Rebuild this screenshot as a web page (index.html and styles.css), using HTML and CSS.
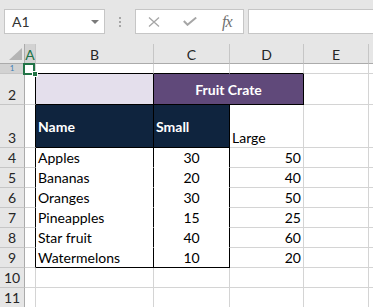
FILE: index.html
```html
<!DOCTYPE html>
<html lang="en">

<head>
    <meta charset="UTF-8">
    <meta name="viewport" content="width=device-width, initial-scale=1.0">
    <title>Fruit Crate</title>
    <link rel="stylesheet" href="styles.css">
</head>

<body>
    <!-- Formula bar -->
    <div class="toolbar">
        <div class="name-box">
            <span>A1</span>
            <span class="drop-arrow"></span>
        </div>
        <div class="grip">
            <span></span><span></span><span></span>
        </div>
        <div class="fx-box">
            <svg class="icon" width="12" height="10" viewBox="0 0 12 10">
                <path d="M1 0.5 L11 9.5 M11 0.5 L1 9.5" stroke="#a6a6a6" stroke-width="1.3" fill="none"/>
            </svg>
            <svg class="icon" width="14" height="9" viewBox="0 0 14 9">
                <path d="M0.8 4 L4.5 7.8 L13.2 0.6" stroke="#a6a6a6" stroke-width="2" fill="none"/>
            </svg>
            <span class="fx">fx</span>
        </div>
        <div class="formula-input"></div>
    </div>

    <!-- Sheet grid -->
    <div class="sheet">
        <!-- column headers -->
        <div class="corner"><span class="select-all"></span></div>
        <div class="ch ch-active">A</div>
        <div class="ch">B</div>
        <div class="ch">C</div>
        <div class="ch">D</div>
        <div class="ch">E</div>
        <div class="ch ch-end"></div>

        <!-- row 1 -->
        <div class="rh rh-active short">1</div>
        <div class="c a1">
            <span class="sel-box"></span>
            <span class="fill-handle"></span>
        </div>
        <div class="c bb"></div>
        <div class="c bb"></div>
        <div class="c bb"></div>
        <div class="c"></div>
        <div class="c c-end"></div>

        <!-- row 2 -->
        <div class="rh">2</div>
        <div class="c br"></div>
        <div class="c lavender br bb"></div>
        <div class="c merged purple br bb">Fruit Crate</div>
        <div class="c"></div>
        <div class="c c-end"></div>

        <!-- row 3 -->
        <div class="rh">3</div>
        <div class="c br"></div>
        <div class="c navy br bb middle">Name</div>
        <div class="c navy br bb middle">Small</div>
        <div class="c">Large</div>
        <div class="c"></div>
        <div class="c c-end"></div>

        <!-- rows 4 - 9 -->
        <div class="rh">4</div>
        <div class="c br"></div>
        <div class="c plain br">Apples</div>
        <div class="c plain br center">30</div>
        <div class="c right">50</div>
        <div class="c"></div>
        <div class="c c-end"></div>

        <div class="rh">5</div>
        <div class="c br"></div>
        <div class="c plain br">Bananas</div>
        <div class="c plain br center">20</div>
        <div class="c right">40</div>
        <div class="c"></div>
        <div class="c c-end"></div>

        <div class="rh">6</div>
        <div class="c br"></div>
        <div class="c plain br">Oranges</div>
        <div class="c plain br center">30</div>
        <div class="c right">50</div>
        <div class="c"></div>
        <div class="c c-end"></div>

        <div class="rh">7</div>
        <div class="c br"></div>
        <div class="c plain br">Pineapples</div>
        <div class="c plain br center">15</div>
        <div class="c right">25</div>
        <div class="c"></div>
        <div class="c c-end"></div>

        <div class="rh">8</div>
        <div class="c br"></div>
        <div class="c plain br">Star fruit</div>
        <div class="c plain br center">40</div>
        <div class="c right">60</div>
        <div class="c"></div>
        <div class="c c-end"></div>

        <div class="rh">9</div>
        <div class="c br"></div>
        <div class="c br bb">Watermelons</div>
        <div class="c br bb center">10</div>
        <div class="c right">20</div>
        <div class="c"></div>
        <div class="c c-end"></div>

        <!-- rows 10 - 11 -->
        <div class="rh">10</div>
        <div class="c"></div>
        <div class="c"></div>
        <div class="c"></div>
        <div class="c"></div>
        <div class="c"></div>
        <div class="c c-end"></div>

        <div class="rh">11</div>
        <div class="c"></div>
        <div class="c"></div>
        <div class="c"></div>
        <div class="c"></div>
        <div class="c"></div>
        <div class="c c-end"></div>
    </div>
</body>

</html>
```

FILE: styles.css
```css
body {
    margin: 0;
    width: 373px;
    height: 307px;
    overflow: hidden;
    background-color: #fff;
    font-family: Lato, "Open Sans", sans-serif;
    font-size: 14px;
    color: #000;
}

/* formula bar */
.toolbar {
    display: flex;
    align-items: flex-start;
    height: 44px;
    padding-top: 9px;
    box-sizing: border-box;
    background-color: #e6e6e6;
}

.name-box {
    display: flex;
    align-items: center;
    justify-content: space-between;
    margin-left: 4px;
    width: 101px;
    height: 25px;
    padding: 0 5px 0 7px;
    box-sizing: border-box;
    background: #fff;
    border: 1px solid #c6c6c6;
    color: #333;
    font-size: 14px;
}

.drop-arrow {
    width: 0;
    height: 0;
    border-left: 4px solid transparent;
    border-right: 4px solid transparent;
    border-top: 4px solid #7a7a7a;
}

.grip {
    display: flex;
    flex-direction: column;
    gap: 2px;
    margin: 8px 0 0 14px;
}

.grip span {
    width: 2px;
    height: 2px;
    background-color: #a6a6a6;
}

.fx-box {
    display: flex;
    align-items: center;
    margin-left: 14px;
    width: 109px;
    height: 25px;
    padding-left: 12px;
    gap: 23px;
    box-sizing: border-box;
    background: #fff;
    border: 1px solid #c6c6c6;
}

.fx-box .icon {
    flex: none;
}

.fx {
    margin-left: 2px;
    font-family: "Liberation Serif", serif;
    font-style: italic;
    font-size: 16px;
    color: #6f6f6f;
    letter-spacing: -1px;
}

.formula-input {
    flex: 1;
    margin-left: 4px;
    height: 25px;
    box-sizing: border-box;
    background: #fff;
    border: 1px solid #c6c6c6;
    border-right: none;
}

/* sheet grid */
.sheet {
    display: grid;
    grid-template-columns: 25px 11px 118px 76px 74px 65px 1fr;
    grid-template-rows: 20px 10px 31px 43px repeat(8, 20px);
}

.sheet > div {
    box-sizing: border-box;
    overflow: hidden;
    white-space: nowrap;
}

.corner {
    position: relative;
    background-color: #e6e6e6;
    border-right: 1px solid #ababab;
    border-bottom: 1px solid #ababab;
}

.select-all {
    position: absolute;
    right: 2px;
    bottom: 3px;
    width: 0;
    height: 0;
    border-left: 13px solid transparent;
    border-bottom: 12px solid #b4b4b4;
}

.ch {
    display: flex;
    align-items: center;
    justify-content: center;
    padding-top: 1px;
    background-color: #e6e6e6;
    border-right: 1px solid #c6c6c6;
    border-bottom: 1px solid #ababab;
    color: #262626;
}

.ch-active {
    background-color: #d2d2d2;
    color: #217346;
}

.ch-end {
    border-right: none;
}

.rh {
    display: flex;
    align-items: flex-end;
    justify-content: center;
    background-color: #e6e6e6;
    border-right: 1px solid #ababab;
    border-bottom: 1px solid #c6c6c6;
    color: #262626;
    line-height: 17px;
    padding-bottom: 1px;
}

.rh-active {
    background-color: #d2d2d2;
    color: #3d7fb5;
}

/* row 1 is only 10px tall */
.short {
    align-items: center;
    padding: 0;
    line-height: 9px;
    font-size: 8px;
}

.c {
    display: flex;
    align-items: flex-end;
    padding: 0 2px 1px 2px;
    border-right: 1px solid #d4d4d4;
    border-bottom: 1px solid #d4d4d4;
    line-height: 17px;
}

.c-end {
    border-right: none;
}

.a1 {
    position: relative;
    overflow: visible !important;
}

.sel-box {
    position: absolute;
    left: -2px;
    top: -1px;
    width: 12px;
    height: 12px;
    box-sizing: border-box;
    border: 2px solid #217346;
}

.fill-handle {
    position: absolute;
    left: 7px;
    top: 7px;
    width: 6px;
    height: 6px;
    box-sizing: border-box;
    background-color: #217346;
    border: 1px solid #fff;
    z-index: 2;
}

/* black cell borders */
.br {
    border-right-color: #000;
}

.bb {
    border-bottom-color: #000;
}

/* white fill hides horizontal gridlines */
.plain {
    border-bottom-color: #fff;
}

.lavender {
    background-color: #e4dfec;
}

.purple {
    background-color: #60497a;
    color: #fff;
    font-weight: bold;
}

.merged {
    grid-column: span 2;
    align-items: center;
    justify-content: center;
    padding-bottom: 0;
}

.navy {
    background-color: #0f243e;
    color: #fff;
    font-weight: bold;
}

.middle {
    align-items: center;
    padding-bottom: 0;
}

.center {
    justify-content: center;
}

.right {
    justify-content: flex-end;
}
```
